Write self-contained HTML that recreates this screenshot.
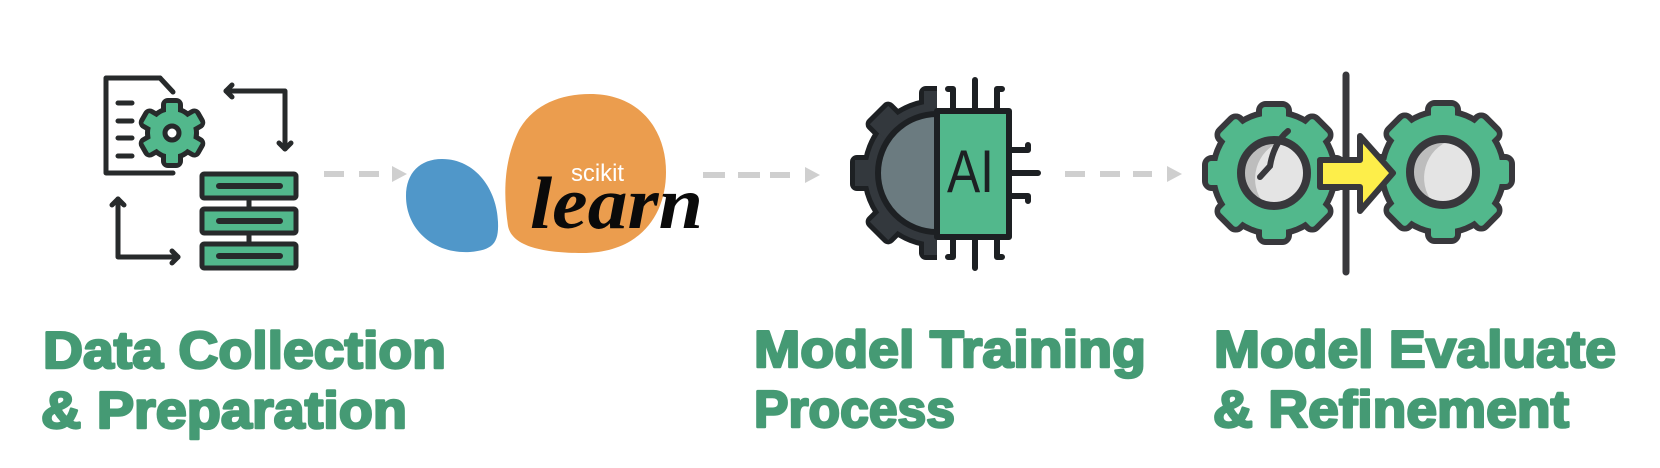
<!DOCTYPE html>
<html><head><meta charset="utf-8"><style>
html,body{margin:0;padding:0;background:#fff;}
svg{display:block;}
</style></head><body>
<svg width="1660" height="468" viewBox="0 0 1660 468" xmlns="http://www.w3.org/2000/svg">
<defs>
<clipPath id="lefthalf"><rect x="800" y="60" width="137" height="240"/></clipPath>
</defs>

<!-- ===== Icon 1: data collection ===== -->
<g fill="none" stroke="#272a2b" stroke-width="5" stroke-linecap="round" stroke-linejoin="round">
  <path d="M160,78 L106,78 L106,173 L173,173"/>
  <path d="M160,78 L173,92"/>
  <path d="M118,103 H132 M118,121 H132 M118,138 H132 M118,156 H132"/>
  <path d="M226,91 H285 V149"/>
  <path d="M232,85 L226,91 L232,97"/>
  <path d="M279,143 L285,149 L291,143"/>
  <path d="M118,199 V257 H178"/>
  <path d="M112,205 L118,199 L124,205"/>
  <path d="M172,251 L178,257 L172,263"/>
  <path d="M249,199 V207 M249,234 V242"/>
</g>
<g transform="translate(172,133)">
  <g stroke="#272a2b" stroke-width="10" stroke-linejoin="round" fill="#272a2b">
    <circle r="22"/>
    <rect x="-6" y="-30" width="12" height="60" rx="2"/>
    <rect x="-6" y="-30" width="12" height="60" rx="2" transform="rotate(60)"/>
    <rect x="-6" y="-30" width="12" height="60" rx="2" transform="rotate(120)"/>
  </g>
  <g fill="#52b88c">
    <circle r="22"/>
    <rect x="-6" y="-30" width="12" height="60" rx="1"/>
    <rect x="-6" y="-30" width="12" height="60" rx="1" transform="rotate(60)"/>
    <rect x="-6" y="-30" width="12" height="60" rx="1" transform="rotate(120)"/>
  </g>
  <circle r="7" fill="#fff" stroke="#272a2b" stroke-width="5"/>
</g>
<g fill="#52b88c" stroke="#272a2b" stroke-width="5" stroke-linejoin="round">
  <rect x="202" y="174" width="94" height="24" rx="2"/>
  <rect x="202" y="209" width="94" height="24" rx="2"/>
  <rect x="202" y="244" width="94" height="24" rx="2"/>
</g>
<g stroke="#272a2b" stroke-width="6" stroke-linecap="round">
  <path d="M219,186 H280 M219,221 H280 M219,256 H280"/>
</g>

<g fill="#cfcfcf">
  <rect x="324" y="171" width="20" height="6"/>
  <rect x="359" y="171" width="20" height="6"/>
  <path d="M392,166 L407,174 L392,182 Z"/>
</g>

<!-- ===== sklearn logo ===== -->
<path d="M590,94 C640,94 666,130 666,172 C666,215 640,253 582,253 C545,253 512,247 508,226 C503,192 504,160 519,130 C533,105 560,94 590,94 Z" fill="#eb9d4e"/>
<path d="M442,159 C476,159 497,190 498,222 C499,244 492,250 470,252 C434,254 406,230 406,196 C406,173 420,159 442,159 Z" fill="#5097c9"/>
<text x="571" y="181" font-family="'Liberation Sans',sans-serif" font-size="24" fill="#fff" textLength="53" lengthAdjust="spacingAndGlyphs">scikit</text>
<text x="530" y="228" font-family="'Liberation Serif',serif" font-style="italic" font-weight="bold" font-size="74" fill="#0a0a0a" textLength="173" lengthAdjust="spacingAndGlyphs">learn</text>

<g fill="#cfcfcf">
  <rect x="703" y="172" width="22" height="6"/>
  <rect x="738" y="172" width="22" height="6"/>
  <rect x="770" y="172" width="20" height="6"/>
  <path d="M805,167 L820,175 L805,183 Z"/>
</g>

<!-- ===== AI icon ===== -->
<g clip-path="url(#lefthalf)">
  <g transform="translate(937,173)">
    <g stroke="#1d2023" stroke-width="10" stroke-linejoin="round" fill="#1d2023">
      <circle r="70"/>
      <rect x="-13" y="-82" width="26" height="164" rx="2"/>
      <rect x="-13" y="-82" width="26" height="164" rx="2" transform="rotate(45)"/>
      <rect x="-13" y="-82" width="26" height="164" rx="2" transform="rotate(90)"/>
      <rect x="-13" y="-82" width="26" height="164" rx="2" transform="rotate(135)"/>
    </g>
    <g fill="#33383d">
      <circle r="70"/>
      <rect x="-13" y="-82" width="26" height="164"/>
      <rect x="-13" y="-82" width="26" height="164" transform="rotate(45)"/>
      <rect x="-13" y="-82" width="26" height="164" transform="rotate(90)"/>
      <rect x="-13" y="-82" width="26" height="164" transform="rotate(135)"/>
    </g>
    <circle r="59" fill="#6b7b80" stroke="#1d2023" stroke-width="6"/>
  </g>
</g>
<g fill="none" stroke="#1d2023" stroke-width="6" stroke-linecap="round" stroke-linejoin="round">
  <path d="M975,80 V110 M953,110 V89 H948 M997,110 V89 H1002"/>
  <path d="M975,237 V268 M953,237 V257 H948 M997,237 V257 H1002"/>
  <path d="M1009,173 H1038 M1009,150 H1028 V145 M1009,196 H1028 V201"/>
</g>
<rect x="937" y="111" width="72" height="126" fill="#52b88c" stroke="#1d2023" stroke-width="6" stroke-linejoin="round"/>
<text x="947" y="192" font-family="'Liberation Sans',sans-serif" font-size="60" fill="#1d2023" textLength="47" lengthAdjust="spacingAndGlyphs">AI</text>

<g fill="#cfcfcf">
  <rect x="1065" y="171" width="20" height="6"/>
  <rect x="1100" y="171" width="20" height="6"/>
  <rect x="1133" y="171" width="19" height="6"/>
  <path d="M1167,166 L1182,174 L1167,182 Z"/>
</g>

<!-- ===== Evaluate gears ===== -->
<line x1="1346" y1="75" x2="1346" y2="272" stroke="#38383c" stroke-width="7" stroke-linecap="round"/>
<g transform="translate(1274,173)">
  <g stroke="#38383c" stroke-width="12" stroke-linejoin="round" fill="#38383c">
    <circle r="58"/>
    <rect x="-12" y="-66" width="24" height="132" rx="4"/>
    <rect x="-12" y="-66" width="24" height="132" rx="4" transform="rotate(45)"/>
    <rect x="-12" y="-66" width="24" height="132" rx="4" transform="rotate(90)"/>
    <rect x="-12" y="-66" width="24" height="132" rx="4" transform="rotate(135)"/>
  </g>
  <g fill="#52b88c">
    <circle r="58"/>
    <rect x="-12" y="-66" width="24" height="132" rx="3"/>
    <rect x="-12" y="-66" width="24" height="132" rx="3" transform="rotate(45)"/>
    <rect x="-12" y="-66" width="24" height="132" rx="3" transform="rotate(90)"/>
    <rect x="-12" y="-66" width="24" height="132" rx="3" transform="rotate(135)"/>
  </g>
  <circle r="33" fill="#e4e4e4"/>
  <path d="M-10,31 A33,33 0 0 1 8,-32 A40,40 0 0 0 -10,31 Z" fill="#bdbdbd"/>
  <circle r="33" fill="none" stroke="#38383c" stroke-width="8"/>
  <path d="M-14,4 L-4,-7 C-2,-20 4,-34 14,-42" fill="none" stroke="#38383c" stroke-width="6" stroke-linecap="round"/>
</g>
<g transform="translate(1443,172)">
  <g stroke="#38383c" stroke-width="12" stroke-linejoin="round" fill="#38383c">
    <circle r="58"/>
    <rect x="-12" y="-66" width="24" height="132" rx="4"/>
    <rect x="-12" y="-66" width="24" height="132" rx="4" transform="rotate(45)"/>
    <rect x="-12" y="-66" width="24" height="132" rx="4" transform="rotate(90)"/>
    <rect x="-12" y="-66" width="24" height="132" rx="4" transform="rotate(135)"/>
  </g>
  <g fill="#52b88c">
    <circle r="58"/>
    <rect x="-12" y="-66" width="24" height="132" rx="3"/>
    <rect x="-12" y="-66" width="24" height="132" rx="3" transform="rotate(45)"/>
    <rect x="-12" y="-66" width="24" height="132" rx="3" transform="rotate(90)"/>
    <rect x="-12" y="-66" width="24" height="132" rx="3" transform="rotate(135)"/>
  </g>
  <circle r="33" fill="#e4e4e4"/>
  <path d="M-10,31 A33,33 0 0 1 8,-32 A40,40 0 0 0 -10,31 Z" fill="#bdbdbd"/>
  <circle r="33" fill="none" stroke="#38383c" stroke-width="8"/>
</g>
<path d="M1320,160 L1360,160 L1360,136 L1393,173 L1360,211 L1360,187 L1320,187 Z" fill="#fdee4a" stroke="#38383c" stroke-width="6" stroke-linejoin="round"/>

<!-- ===== Titles ===== -->
<g font-family="'Liberation Sans',sans-serif" font-weight="bold" font-size="52" fill="#459a74" stroke="#459a74" stroke-width="2.5" stroke-linejoin="round">
  <text x="43" y="368" textLength="403" lengthAdjust="spacingAndGlyphs">Data Collection</text>
  <text x="41" y="428" textLength="366" lengthAdjust="spacingAndGlyphs">&amp; Preparation</text>
  <text x="754" y="367" textLength="392" lengthAdjust="spacingAndGlyphs">Model Training</text>
  <text x="754" y="427" textLength="201" lengthAdjust="spacingAndGlyphs">Process</text>
  <text x="1214" y="367" textLength="402" lengthAdjust="spacingAndGlyphs">Model Evaluate</text>
  <text x="1213" y="427" textLength="356" lengthAdjust="spacingAndGlyphs">&amp; Refinement</text>
</g>
</svg>
</body></html>
